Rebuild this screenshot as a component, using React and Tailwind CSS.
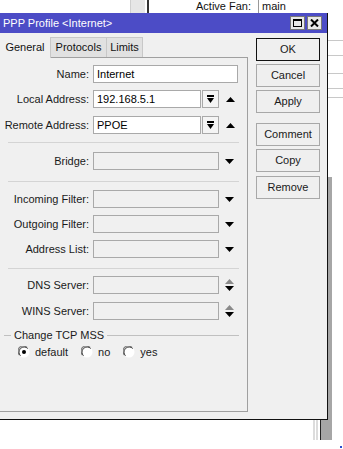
import React from "react";

const rowLabel = "w-[90px] shrink-0 text-right pr-[1px] text-[#1a1a1a]";

function DownTri({ color = "#000" }) {
  return (
    <svg width="9" height="5" viewBox="0 0 9 5">
      <polygon points="0,0 9,0 4.5,5" fill={color} />
    </svg>
  );
}

function UpTri({ color = "#000" }) {
  return (
    <svg width="9" height="5" viewBox="0 0 9 5">
      <polygon points="0,5 9,5 4.5,0" fill={color} />
    </svg>
  );
}

function Field({ value, white, className }) {
  return (
    <div
      className={`h-[18px] border border-[#a9a9a9] flex items-center pl-[3px] text-black ${
        white ? "bg-white" : "bg-[#f0f0f0]"
      } ${className}`}
    >
      {value}
    </div>
  );
}

// address row: input + dropdown button + up arrow
function AddrRow({ label, value, mt }) {
  return (
    <div className={`flex items-center h-[18px] ${mt}`}>
      <div className={rowLabel}>{label}</div>
      <div className="ml-[3px] flex">
        <Field value={value} white className="w-[108px]" />
        <div className="ml-[1px] w-[17px] h-[18px] border border-[#a9a9a9] bg-[#f4f4f4] flex flex-col items-center justify-center gap-[1px]">
          <div className="w-[7px] h-[2px] bg-black" />
          <svg width="7" height="5" viewBox="0 0 7 5">
            <polygon points="0,0 7,0 3.5,5" fill="#000" />
          </svg>
        </div>
      </div>
      <div className="ml-[7px] flex">
        <UpTri />
      </div>
    </div>
  );
}

function DropRow({ label, mt }) {
  return (
    <div className={`flex items-center h-[18px] ${mt}`}>
      <div className={rowLabel}>{label}</div>
      <Field className="ml-[3px] w-[126px]" />
      <div className="ml-[6px] flex">
        <DownTri />
      </div>
    </div>
  );
}

function SpinRow({ label, mt }) {
  return (
    <div className={`flex items-center h-[18px] ${mt}`}>
      <div className={rowLabel}>{label}</div>
      <Field className="ml-[3px] w-[126px]" />
      <div className="ml-[6px] flex flex-col gap-[2px]">
        <UpTri color="#8a8a8a" />
        <DownTri />
      </div>
    </div>
  );
}

function Radio({ checked, label }) {
  return (
    <div className="flex items-center">
      <svg width="12" height="12" viewBox="0 0 12 12">
        <circle cx="6" cy="6" r="5.5" fill="#fff" />
        <path d="M1.5 9 A5 5 0 0 1 9 1.5" stroke="#808080" strokeWidth="1.2" fill="none" />
        <path d="M2.5 9.8 A4.5 4.5 0 0 1 9.8 2.5" stroke="#404040" strokeWidth="1" fill="none" />
        {checked && <circle cx="6" cy="6" r="2" fill="#000" />}
      </svg>
      <span className="ml-[5px] text-[#1a1a1a]">{label}</span>
    </div>
  );
}

function Btn({ children, def, mt }) {
  return (
    <div
      className={`h-[23px] w-[64px] flex items-center justify-center bg-[#efefef] text-[#1a1a1a] ${
        def ? "border border-[#111]" : "border border-[#a8a8a8]"
      } ${mt}`}
    >
      {children}
    </div>
  );
}

export default function App() {
  return (
    <div className="relative w-[343px] h-[449px] bg-white overflow-hidden font-['Liberation_Sans',Arial,sans-serif] text-[11px] leading-none">
      {/* window behind */}
      <div className="absolute left-[130px] top-0 w-[15px] h-[13px] bg-[#e6e6e6] border-l border-[#cfcfcf]" />
      <div className="absolute left-[147px] top-0 w-[2px] h-[13px] bg-[#333]" />
      <div className="absolute left-[196px] top-[1px] text-[#111] text-[11px]">Active Fan:</div>
      <div className="absolute left-[258px] top-0 w-px h-[13px] bg-[#999]" />
      <div className="absolute left-[262px] top-[1px] text-[#111] text-[11px]">main</div>
      <div className="absolute left-[328px] top-[40px] w-[15px] h-px bg-[#c8c8c8]" />
      <div className="absolute left-[328px] top-[55px] w-[15px] h-px bg-[#c8c8c8]" />
      <div className="absolute left-[328px] top-[73px] w-[15px] h-px bg-[#c8c8c8]" />
      <div className="absolute left-[328px] top-[88px] w-[15px] h-px bg-[#c8c8c8]" />
      <div className="absolute left-[328px] top-[97px] w-[15px] h-px bg-[#c8c8c8]" />
      <div className="absolute left-[320px] top-[177px] w-[12px] h-[263px] bg-[#a6a6a6] border-l border-[#222]" />
      <div className="absolute left-[313px] top-[419px] w-[2px] h-[21px] bg-[#dcdcdc]" />
      <div className="absolute left-[316px] top-[419px] w-[2px] h-[21px] bg-[#dcdcdc]" />
      <div className="absolute left-[340px] top-[446px] w-[2px] h-[2px] bg-[#2a4cd0]" />

      {/* dialog */}
      <div className="absolute left-0 top-[13px] w-[328px] h-[407px] bg-[#f0f0f0] border-r border-b border-[#111] flex flex-col">
        {/* title bar */}
        <div className="h-[20px] bg-[#4c4cc6] flex items-center pl-[3px] pr-[5px]">
          <span className="text-white text-[11px]">PPP Profile &lt;Internet&gt;</span>
          <div className="ml-auto flex gap-[2px]">
            <div className="w-[15px] h-[14px] bg-[#e8e8e8] border border-[#777] flex items-center justify-center">
              <div className="w-[9px] h-[8px] border border-black border-t-2" />
            </div>
            <div className="w-[15px] h-[14px] bg-[#e8e8e8] border border-[#777] flex items-center justify-center">
              <svg width="9" height="8" viewBox="0 0 9 8">
                <path d="M1 0.5 L8 7.5 M8 0.5 L1 7.5" stroke="#000" strokeWidth="2" />
              </svg>
            </div>
          </div>
        </div>

        <div className="flex flex-1 pt-[3px]">
          {/* left: tabs + panel */}
          <div className="w-[248px] flex flex-col">
            <div className="flex h-[21px] items-end">
              <div className="h-[21px] w-[51px] flex items-center justify-center bg-[#f0f0f0] border-r border-[#c8c8c8] text-[#111] relative z-10 -mb-px">
                General
              </div>
              <div className="h-[20px] w-[56px] flex items-center justify-center bg-[#e1e1e1] border-r border-t border-[#c8c8c8] text-[#111]">
                Protocols
              </div>
              <div className="h-[20px] w-[36px] flex items-center justify-center bg-[#e1e1e1] border-r border-t border-[#c8c8c8] text-[#111]">
                Limits
              </div>
            </div>
            <div className="flex-1 mb-[7px] border-t border-r border-b border-[#a0a0a0] pt-[7px] flex flex-col">
              <div className="flex items-center h-[18px]">
                <div className={rowLabel}>Name:</div>
                <Field value="Internet" white className="ml-[3px] w-[145px]" />
              </div>
              <AddrRow label="Local Address:" value="192.168.5.1" mt="mt-[7px]" />
              <AddrRow label="Remote Address:" value="PPOE" mt="mt-[8px]" />
              <div className="mt-[8px] ml-[8px] w-[231px] h-px bg-[#d4d4d4]" />
              <DropRow label="Bridge:" mt="mt-[9px]" />
              <div className="mt-[11px] ml-[8px] w-[231px] h-px bg-[#d4d4d4]" />
              <DropRow label="Incoming Filter:" mt="mt-[8px]" />
              <DropRow label="Outgoing Filter:" mt="mt-[7px]" />
              <DropRow label="Address List:" mt="mt-[7px]" />
              <div className="mt-[10px] ml-[8px] w-[231px] h-px bg-[#d4d4d4]" />
              <SpinRow label="DNS Server:" mt="mt-[7px]" />
              <SpinRow label="WINS Server:" mt="mt-[8px]" />
              <div className="mt-[9px] flex items-center h-[12px]">
                <div className="ml-[4px] w-[7px] h-px bg-[#c0c0c0]" />
                <span className="mx-[3px] text-[#1a1a1a]">Change TCP MSS</span>
                <div className="w-[132px] h-px bg-[#c0c0c0]" />
              </div>
              <div className="mt-[5px] ml-[18px] flex items-center gap-[13px] h-[12px]">
                <Radio checked label="default" />
                <Radio label="no" />
                <Radio label="yes" />
              </div>
            </div>
          </div>

          {/* right: buttons */}
          <div className="ml-[8px] pt-[2px] flex flex-col">
            <Btn def>OK</Btn>
            <Btn mt="mt-[3px]">Cancel</Btn>
            <Btn mt="mt-[3px]">Apply</Btn>
            <Btn mt="mt-[10px]">Comment</Btn>
            <Btn mt="mt-[3px]">Copy</Btn>
            <Btn mt="mt-[4px]">Remove</Btn>
          </div>
        </div>
      </div>
    </div>
  );
}
